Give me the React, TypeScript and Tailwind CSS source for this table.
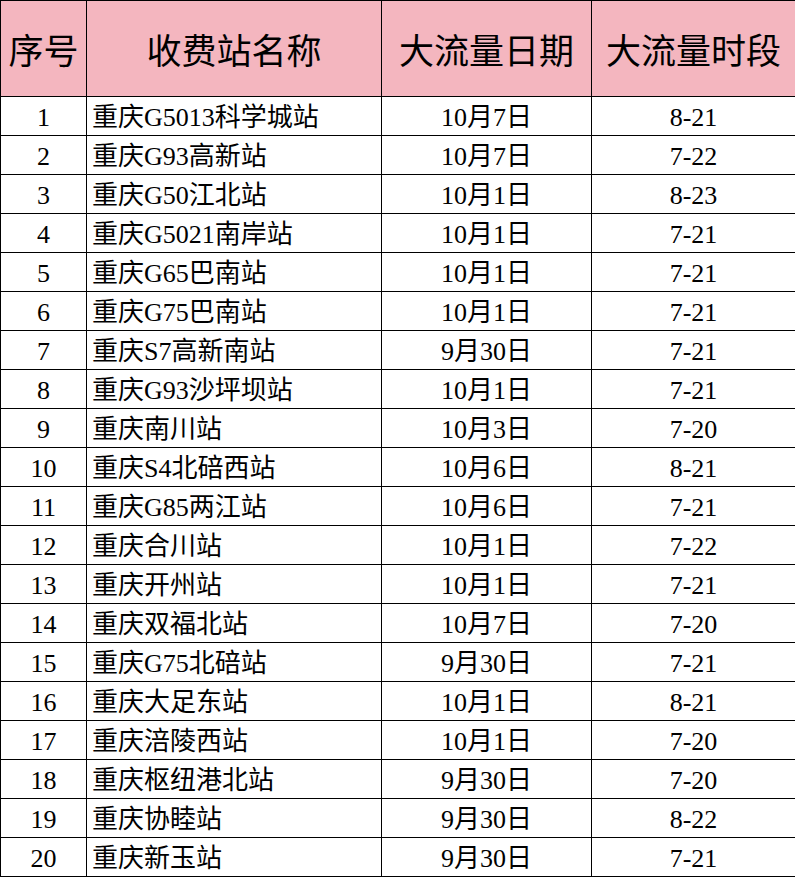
const rows: [string, string, string][] = [
  ['重庆G5013科学城站', '10月7日', '8-21'],
  ['重庆G93高新站', '10月7日', '7-22'],
  ['重庆G50江北站', '10月1日', '8-23'],
  ['重庆G5021南岸站', '10月1日', '7-21'],
  ['重庆G65巴南站', '10月1日', '7-21'],
  ['重庆G75巴南站', '10月1日', '7-21'],
  ['重庆S7高新南站', '9月30日', '7-21'],
  ['重庆G93沙坪坝站', '10月1日', '7-21'],
  ['重庆南川站', '10月3日', '7-20'],
  ['重庆S4北碚西站', '10月6日', '8-21'],
  ['重庆G85两江站', '10月6日', '7-21'],
  ['重庆合川站', '10月1日', '7-22'],
  ['重庆开州站', '10月1日', '7-21'],
  ['重庆双福北站', '10月7日', '7-20'],
  ['重庆G75北碚站', '9月30日', '7-21'],
  ['重庆大足东站', '10月1日', '8-21'],
  ['重庆涪陵西站', '10月1日', '7-20'],
  ['重庆枢纽港北站', '9月30日', '7-20'],
  ['重庆协睦站', '9月30日', '8-22'],
  ['重庆新玉站', '9月30日', '7-21'],
];

export default function App() {
  return (
    <div className="w-[795px] h-[877px] overflow-hidden bg-white text-black font-['Liberation_Serif','Noto_Sans_CJK_SC',serif]">
      <table className="table-fixed border-collapse w-[797px]">
        <colgroup>
          <col className="w-[86px]" />
          <col className="w-[295px]" />
          <col className="w-[210px]" />
          <col className="w-[206px]" />
        </colgroup>
        <thead>
          <tr className="h-[96px] bg-[#f4b6bf] text-[35px] leading-none">
            <th className="border border-black font-normal p-0 pt-[8px] text-center">序号</th>
            <th className="border border-black font-normal p-0 pt-[8px] text-center">收费站名称</th>
            <th className="border border-black font-normal p-0 pt-[8px] text-center">大流量日期</th>
            <th className="border border-black font-normal p-0 pt-[8px] text-center pr-[2px]">大流量时段</th>
          </tr>
        </thead>
        <tbody className="text-[26px] leading-none">
          {rows.map(([name, date, time], i) => (
            <tr key={i} className="h-[39px]">
              <td className="border border-black p-0 pt-[3px] text-center">{i + 1}</td>
              <td className="border border-black p-0 pt-[3px] pl-[5px] text-left">{name}</td>
              <td className="border border-black p-0 pt-[3px] text-center">{date}</td>
              <td className="border border-black p-0 pt-[3px] text-center pr-[2px]">{time}</td>
            </tr>
          ))}
        </tbody>
      </table>
    </div>
  );
}
